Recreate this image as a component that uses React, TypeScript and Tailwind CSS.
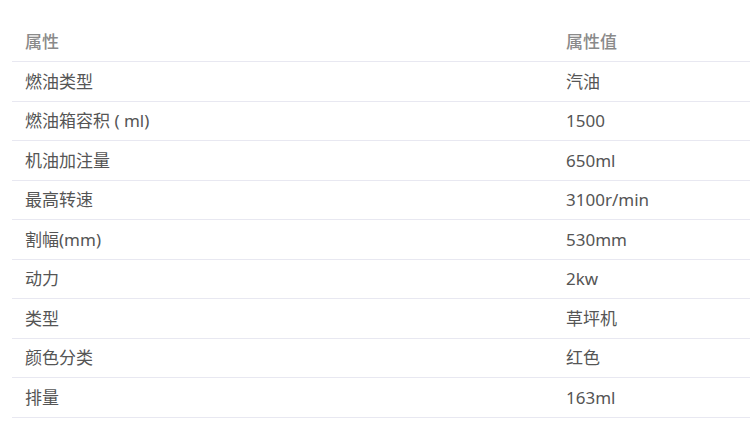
const rows: [string, string][] = [
  ["燃油类型", "汽油"],
  ["燃油箱容积 ( ml)", "1500"],
  ["机油加注量", "650ml"],
  ["最高转速", "3100r/min"],
  ["割幅(mm)", "530mm"],
  ["动力", "2kw"],
  ["类型", "草坪机"],
  ["颜色分类", "红色"],
  ["排量", "163ml"],
];

export default function App() {
  return (
    <div
      className="w-[750px] h-[429px] bg-white overflow-hidden pt-[22px] pl-[12px]"
      style={{ fontFamily: '"Noto Sans", "Noto Sans CJK SC", sans-serif' }}
    >
      <div className="w-[738px] text-[17px]">
        <div className="grid grid-cols-[541px_1fr] h-[40px] items-center border-b border-[#e8e8f1] text-[#8a8a8a] font-medium">
          <div className="pl-[13px] pt-px">属性</div>
          <div className="pl-[13px] pt-px">属性值</div>
        </div>
        {rows.map(([k, v]) => (
          <div
            key={k}
            className="grid grid-cols-[541px_1fr] h-[39.5px] items-center border-b border-[#e8e8f1] text-[#555]"
          >
            <div className="pl-[13px]">{k}</div>
            <div className="pl-[13px]">{v}</div>
          </div>
        ))}
      </div>
    </div>
  );
}
